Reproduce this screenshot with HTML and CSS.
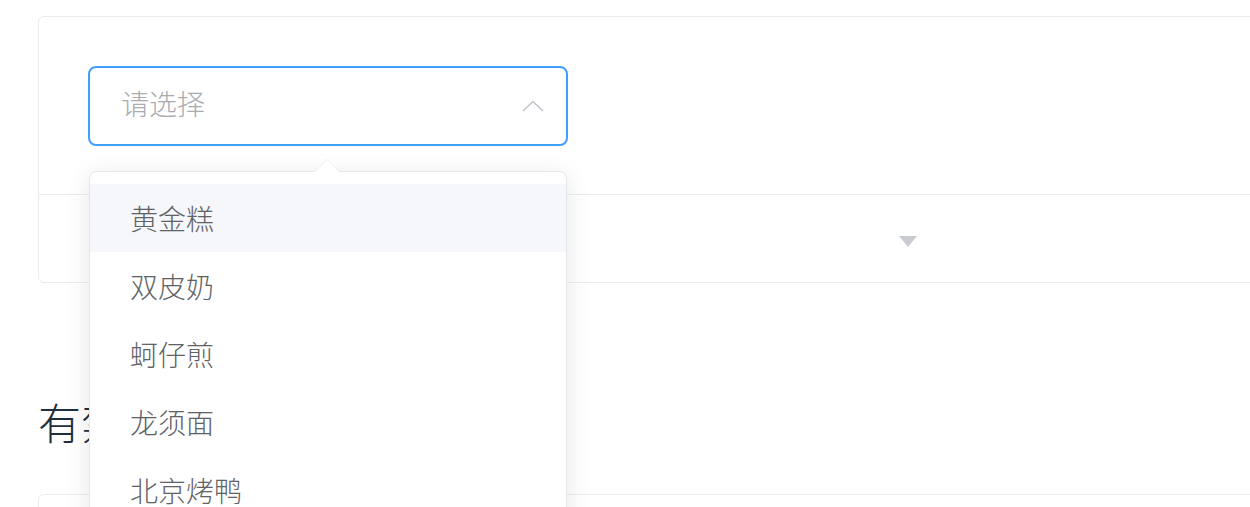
FILE: index.html
```html
<!DOCTYPE html>
<html lang="zh">
<head>
<meta charset="utf-8">
<link rel="stylesheet" href="styles.css">
</head>
<body>
<div class="page">
  <div class="demo-block">
    <div class="source">
      <div class="select">
        <span class="placeholder">请选择</span>
        <svg class="arrow" width="22" height="12" viewBox="0 0 22 12"><path d="M1 11 L11 1.5 L21 11" fill="none" stroke="#c0c4cc" stroke-width="1.6"/></svg>
      </div>
    </div>
    <div class="control"><span class="caret"></span></div>
  </div>
  <h3 class="title">有禁用选项</h3>
  <div class="demo-block second"></div>

  <div class="dropdown">
    <span class="popper-arrow"></span>
    <ul class="options">
      <li class="option hover">黄金糕</li>
      <li class="option">双皮奶</li>
      <li class="option">蚵仔煎</li>
      <li class="option">龙须面</li>
      <li class="option">北京烤鸭</li>
    </ul>
  </div>
</div>
</body>
</html>
```
FILE: styles.css
```css
html, body {
  margin: 0;
  padding: 0;
  background: #fff;
  overflow: hidden;
}
body {
  width: 1250px;
  height: 507px;
  font-family: "Noto Sans CJK SC", "Noto Sans", sans-serif;
}
.page {
  position: relative;
  padding: 16px 0 0 38px;
  width: 1400px;
  height: 491px;
  overflow: hidden;
}
.demo-block {
  border: 1px solid #ebebeb;
  border-radius: 6px;
  width: 1360px;
}
.source {
  padding: 49px 49px 48px 49px;
  border-bottom: 1px solid #ebebeb;
}
.select {
  box-sizing: border-box;
  width: 480px;
  height: 80px;
  border: 2px solid #409eff;
  border-radius: 8px;
  display: flex;
  align-items: center;
  justify-content: space-between;
  padding: 0 22px 0 31px;
}
.placeholder {
  font-size: 28px;
  font-weight: 300;
  color: #a9abb0;
  line-height: 1;
  margin-bottom: 6px;
}
.control {
  height: 87px;
  display: flex;
  align-items: center;
  padding-left: 860px;
}
.caret {
  width: 0;
  height: 0;
  border-left: 9px solid transparent;
  border-right: 9px solid transparent;
  border-top: 11px solid #c8cbd0;
  margin-top: 6px;
}
.title {
  margin: 108px 0 0 0;
  font-size: 43px;
  font-weight: 300;
  line-height: 60px;
  color: #1f2f3d;
}
.second {
  margin-top: 43px;
  height: 100px;
}
.dropdown {
  position: absolute;
  left: 89px;
  top: 171px;
  width: 478px;
  box-sizing: border-box;
  border: 1px solid #e4e7ed;
  border-radius: 8px;
  background: #fff;
  box-shadow: 0 4px 24px rgba(0,0,0,0.1);
}
.popper-arrow {
  position: absolute;
  top: -13px;
  left: 224px;
  width: 0;
  height: 0;
  border-left: 13px solid transparent;
  border-right: 13px solid transparent;
  border-bottom: 13px solid #ebeef5;
}
.popper-arrow::after {
  content: "";
  position: absolute;
  left: -12px;
  top: 1px;
  border-left: 12px solid transparent;
  border-right: 12px solid transparent;
  border-bottom: 12px solid #fff;
}
.options {
  list-style: none;
  margin: 0;
  padding: 12px 0;
}
.option {
  height: 68px;
  line-height: 68px;
  padding: 0 40px;
  font-size: 28px;
  font-weight: 300;
  color: #606266;
}
.option.hover {
  background: #f5f7fa;
}
```
